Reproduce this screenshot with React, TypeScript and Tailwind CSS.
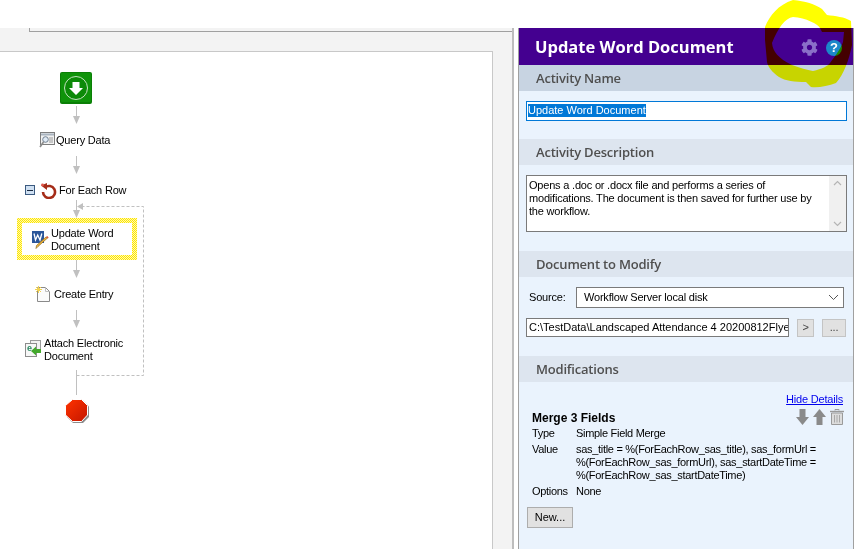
import React from 'react'
import { FaCog } from 'react-icons/fa'

const ui = 'font-["Liberation_Sans",Arial,sans-serif]'
const heading = 'font-["Open_Sans","Noto_Sans",sans-serif]'

function SectionHeader({ title, dark }: { title: string; dark?: boolean }) {
  return (
    <div className={`h-[26px] shrink-0 pl-[17px] pt-[1px] flex items-center text-[13px] font-semibold text-[#4f4f4f] ${dark ? 'bg-[#c8d4e2]' : 'bg-[#dde5ef]'} ${heading}`}>
      {title}
    </div>
  )
}

function Connectors() {
  const stroke = '#c0c0c0'
  const arrows = [
    [54, 72],
    [104, 122],
    [148, 166],
    [208, 226],
    [258, 276],
  ]
  return (
    <svg className="absolute left-0 top-0" width="160" height="400" fill="none">
      {arrows.map(([a, b]) => (
        <g key={a}>
          <path d={`M76.5 ${a}V${b - 6}`} stroke={stroke} strokeWidth="1" />
          <path d={`M73 ${b - 8}H80L76.5 ${b}Z`} fill={stroke} />
        </g>
      ))}
      <path d="M76.5 318V343" stroke={stroke} />
      <path d="M76.5 323.5H143.5V154.5H83" stroke={stroke} strokeDasharray="3 2" />
      <path d="M83 151V158L77 154.5Z" fill={stroke} />
    </svg>
  )
}

function StartIcon() {
  return (
    <svg width="32" height="32" viewBox="0 0 32 32">
      <rect x="0" y="0" width="32" height="32" rx="2" fill="#0a7f06" />
      <rect x="1" y="1" width="30" height="29" rx="1" fill="#0f930a" />
      <circle cx="16" cy="16" r="11.5" fill="#0c8a08" stroke="#c4e2c0" strokeWidth="1" />
      <path d="M12.5 10H19.5V16H23L16 23L9 16H12.5Z" fill="#ffffff" />
    </svg>
  )
}

function QueryIcon() {
  return (
    <svg width="16" height="16" viewBox="0 0 16 16" fill="none">
      <rect x="1.5" y="0.5" width="14" height="12" fill="#f2f2f2" stroke="#7d7d7d" />
      <path d="M2 2.5H15" stroke="#a9b4c0" strokeWidth="2" />
      <path d="M10 6H14M10 8H14M10 10H14" stroke="#9a9a9a" />
      <circle cx="6.5" cy="7.5" r="2.8" fill="#dfeaf5" stroke="#6f7f90" />
      <path d="M4.5 10L1 15" stroke="#8a8a8a" strokeWidth="1.6" />
    </svg>
  )
}

function LoopIcon() {
  return (
    <svg width="17" height="17" viewBox="0 0 17 17" fill="none">
      <path d="M5 5.5A6 6 0 1 1 3 10" stroke="#a52c18" strokeWidth="2.6" />
      <path d="M1 3.5L7 1V8Z" fill="#a52c18" />
      <circle cx="2.5" cy="3" r="1.4" fill="#e2574c" />
    </svg>
  )
}

function WordIcon() {
  return (
    <svg width="17" height="18" viewBox="0 0 17 18" fill="none">
      <rect x="0" y="0" width="12" height="12" fill="#2b569a" />
      <path d="M2 2.5L3.5 9L5.7 4L8 9L9.8 2.5" stroke="#ffffff" strokeWidth="1.3" />
      <path d="M15.5 7L6 15.5L4 17.5L4.5 14.5L14 6Z" fill="#efb43a" stroke="#8d6a22" strokeWidth="0.7" />
      <path d="M14 6L15.7 7.6L16.7 6.4L15.2 5Z" fill="#d9583c" />
    </svg>
  )
}

function NewEntryIcon() {
  return (
    <svg width="15" height="16" viewBox="0 0 15 16" fill="none">
      <path d="M2.5 1.5H10.5L14.5 5.5V15.5H2.5Z" fill="#fbfbfb" stroke="#8a8a8a" />
      <path d="M10.5 1.5V5.5H14.5" stroke="#c0c0c0" />
      <path d="M3.5 0V7M0 3.5H7M1 1L6 6M6 1L1 6" stroke="#f2d24e" strokeWidth="1" />
    </svg>
  )
}

function AttachIcon() {
  return (
    <svg width="17" height="17" viewBox="0 0 17 17" fill="none">
      <rect x="5.5" y="0.5" width="10" height="12" fill="#f1f1f1" stroke="#9b9b9b" />
      <rect x="0.5" y="3.5" width="11" height="13" fill="#f7f7f7" stroke="#8c8c8c" />
      <text x="2" y="11" fontSize="9" fontWeight="700" fill="#2d8a63" fontFamily="Liberation Sans">e</text>
      <path d="M16 9H11V6.5L6 11L11 15.5V13H16Z" fill="#43a82c" />
    </svg>
  )
}

function StopIcon() {
  return (
    <svg width="25" height="25" viewBox="0 0 25 25">
      <defs>
        <linearGradient id="stopRed" x1="0" y1="0" x2="1" y2="1">
          <stop offset="0" stopColor="#ff3300" />
          <stop offset="1" stopColor="#c41600" />
        </linearGradient>
      </defs>
      <path d="M8 1.5H18L24 7.5V18L18 24H8L2 18V7.5Z" fill="#8c8c8c" />
      <path d="M7.5 0.5H16.5L22.5 6.5V16L16.5 22.5H7.5L0.5 16V6.5Z" fill="url(#stopRed)" stroke="#ffffff" strokeWidth="1" />
    </svg>
  )
}

function HelpIcon() {
  return (
    <div className={`w-[16px] h-[16px] rounded-full bg-[#1b87c9] flex items-center justify-center text-white text-[13px] font-bold leading-none ${ui}`}>
      ?
    </div>
  )
}

function ArrowGlyph({ up }: { up?: boolean }) {
  return (
    <svg width="13" height="16" viewBox="0 0 13 16" className={up ? 'rotate-180' : ''}>
      <path d="M3.5 0H9.5V8H13L6.5 16L0 8H3.5Z" fill="#8a8a8a" />
    </svg>
  )
}

function TrashIcon() {
  return (
    <svg width="14" height="16" viewBox="0 0 14 16" fill="none">
      <path d="M0 2.5H14" stroke="#9a9a9a" strokeWidth="1.4" />
      <path d="M5 1.5V0.5H9V1.5" stroke="#9a9a9a" />
      <path d="M1.5 4H12.5V15.5H1.5Z" fill="#dcdcdc" stroke="#9a9a9a" />
      <path d="M4.5 6V13.5M7 6V13.5M9.5 6V13.5" stroke="#a8a8a8" />
    </svg>
  )
}

export default function App() {
  return (
    <div className={`relative w-[855px] h-[549px] overflow-hidden bg-white flex flex-col text-[11px] text-black tracking-[-0.2px] ${ui}`}>
      <div className="h-[28px] shrink-0" />
      <div className="flex flex-1 min-h-0">
        {/* designer side */}
        <div className="w-[514px] shrink-0 bg-[#f3f3f3] border-r-2 border-[#bdbdbd] flex flex-col">
          <div className="ml-[29px] h-[4px] shrink-0 border-l border-b border-[#a0a0a0]" />
          <div className="h-[19px] shrink-0" />
          <div className="relative flex-1 w-[493px] bg-white border-t border-r border-[#c8c8c8]">
            <Connectors />
            <div className="absolute left-[60px] top-[20px]"><StartIcon /></div>

            <div className="absolute left-[39px] top-[80px]"><QueryIcon /></div>
            <div className="absolute left-[56px] top-[82px] leading-[13px]">Query Data</div>

            <div className="absolute left-[25px] top-[133px] w-[10px] h-[10px] border border-[#3b5a80] bg-[#cfe0f2] flex items-center justify-center">
              <div className="w-[6px] h-[1px] bg-[#1a2a40]" />
            </div>
            <div className="absolute left-[40px] top-[130px]"><LoopIcon /></div>
            <div className="absolute left-[59px] top-[132px] leading-[13px]">For Each Row</div>

            <div className="absolute left-[17px] top-[166px] w-[120px] h-[42px] p-[5px] bg-[repeating-conic-gradient(#ffe600_0%_25%,#fff9b0_0%_50%)] bg-size-[2px_2px]">
              <div className="w-full h-full bg-white" />
            </div>
            <div className="absolute left-[32px] top-[179px]"><WordIcon /></div>
            <div className="absolute left-[51px] top-[175px] leading-[13px]">Update Word<br />Document</div>

            <div className="absolute left-[35px] top-[234px]"><NewEntryIcon /></div>
            <div className="absolute left-[54px] top-[236px] leading-[13px]">Create Entry</div>

            <div className="absolute left-[25px] top-[288px]"><AttachIcon /></div>
            <div className="absolute left-[44px] top-[285px] leading-[13px]">Attach Electronic<br />Document</div>

            <div className="absolute left-[65px] top-[347px]"><StopIcon /></div>
          </div>
        </div>

        <div className="w-[4px] shrink-0" />

        {/* properties panel */}
        <div className="flex-1 min-w-0 mr-[1px] border-x border-[#a0a0a0] bg-[#eaf3fd] flex flex-col">
          <div className="h-[37px] shrink-0 bg-[#440090] flex items-center pl-[16px] pr-[11px] pt-[2px] tracking-normal">
            <div className={`flex-1 text-[16.5px] font-bold text-white ${heading}`}>Update Word Document</div>
            <div className="flex items-center gap-[8px]">
              <FaCog className="text-[#8a6fc8]" size={17} />
              <HelpIcon />
            </div>
          </div>

          <SectionHeader title="Activity Name" dark />
          <div className="h-[48px] shrink-0 pl-[7px] pr-[6px] pt-[10px] tracking-normal">
            <div className="h-[20px] bg-white border border-[#0078d7] px-[1px] pt-[2px] leading-[13px]">
              <span className="inline-block bg-[#0078d7] text-white">Update Word Document</span>
            </div>
          </div>

          <SectionHeader title="Activity Description" />
          <div className="h-[86px] shrink-0 pl-[7px] pr-[6px] pt-[10px]">
            <div className="h-[57px] flex bg-white border border-[#7a7a7a]">
              <div className="flex-1 pl-[2px] pt-[3px] leading-[13px]">
                Opens a .doc or .docx file and performs a series of modifications. The document is then saved for further use by the workflow.
              </div>
              <div className="w-[17px] bg-[#f0f0f0] flex flex-col items-center justify-between py-[4px] text-[#b5b5b5]">
                <svg width="9" height="6" viewBox="0 0 9 6" fill="none"><path d="M1 5L4.5 1.5L8 5" stroke="currentColor" strokeWidth="1.2" /></svg>
                <svg width="9" height="6" viewBox="0 0 9 6" fill="none"><path d="M1 1L4.5 4.5L8 1" stroke="currentColor" strokeWidth="1.2" /></svg>
              </div>
            </div>
          </div>

          <SectionHeader title="Document to Modify" />
          <div className="h-[79px] shrink-0 pl-[7px] pr-[6px] pt-[10px]">
            <div className="flex items-center h-[21px]">
              <div className="w-[50px] pl-[3px]">Source:</div>
              <div className="w-[268px] h-[21px] bg-white border border-[#7a7a7a] flex items-center justify-between pl-[7px] pr-[4px]">
                <span>Workflow Server local disk</span>
                <svg width="11" height="7" viewBox="0 0 11 7" fill="none"><path d="M1 1L5.5 5.5L10 1" stroke="#555555" /></svg>
              </div>
            </div>
            <div className="flex items-center h-[19px] mt-[10px]">
              <div className="w-[263px] h-[19px] bg-white border border-[#7a7a7a] pl-[2px] leading-[17px] overflow-hidden whitespace-nowrap tracking-normal">
                C:\TestData\Landscaped Attendance 4 20200812Flye
              </div>
              <div className="ml-[8px] w-[17px] h-[18px] bg-[#e1e1e1] border border-[#c4c4c4] text-[#444444] flex items-center justify-center leading-none">&gt;</div>
              <div className="ml-[8px] w-[24px] h-[18px] bg-[#e1e1e1] border border-[#c4c4c4] text-[#444444] flex items-center justify-center leading-none">...</div>
            </div>
          </div>

          <SectionHeader title="Modifications" />
          <div className="flex-1 pl-[13px] pr-[10px] pt-[11px]">
            <div className="flex justify-end leading-[13px]">
              <span className="text-[#0000ee] underline">Hide Details</span>
            </div>
            <div className="flex justify-between h-[16px] mt-[3px] -mr-[1px]">
              <div className="font-bold text-[12px] pt-[3px] leading-[13px] tracking-normal">Merge 3 Fields</div>
              <div className="flex gap-[4px]">
                <ArrowGlyph />
                <ArrowGlyph up />
                <TrashIcon />
              </div>
            </div>
            <div className="grid grid-cols-[44px_1fr] leading-[13px] mt-[2px] gap-y-[3px] tracking-[-0.3px]">
              <div>Type</div>
              <div>Simple Field Merge</div>
              <div>Value</div>
              <div>
                sas_title = %(ForEachRow_sas_title), sas_formUrl =<br />
                %(ForEachRow_sas_formUrl), sas_startDateTime =<br />
                %(ForEachRow_sas_startDateTime)
              </div>
              <div>Options</div>
              <div>None</div>
            </div>
            <div className="-ml-[5px] mt-[9px] w-[46px] h-[21px] bg-[#e1e1e1] border border-[#adadad] flex items-center justify-center tracking-normal">New...</div>
          </div>
        </div>
      </div>

      {/* yellow marker annotation drawn over the screenshot */}
      <svg className="absolute left-0 top-0 mix-blend-multiply pointer-events-none" width="855" height="549">
        <path
          fill="#ffff00"
          fillRule="evenodd"
          d="M793 0C805 1 815 4 822 9L827 15C835 16 845 17 851 21L852 45C849 60 844 74 836 83C828 86 818 88 811 87L806 82C795 82 785 81 779 77C772 72 768 67 767 62L765 40L765 27C770 15 778 5 793 0ZM793 17C785 18 778 28 772 43C773 52 778 58 792 65C800 68 807 70 813 71C822 69 828 66 830 63C836 55 841 48 843 42L844 32L822 32L820 28C818 24 806 18 793 17Z"
        />
      </svg>
    </div>
  )
}
